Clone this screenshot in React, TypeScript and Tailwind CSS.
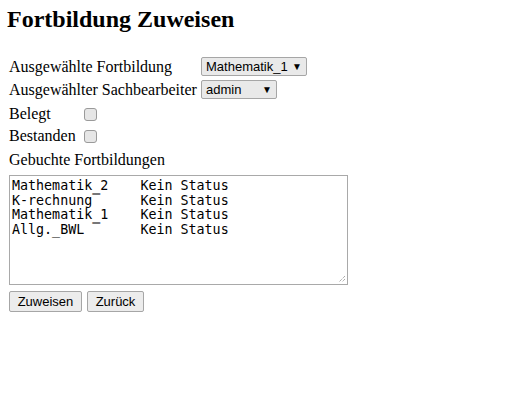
import React from "react";

const serif = { fontFamily: '"Liberation Serif", "Times New Roman", serif' };

function FakeSelect({ value, width }: { value: string; width: string }) {
  return (
    <div
      className={`flex h-[19px] items-center justify-between rounded-[2px] border border-[#a6a6a6] bg-[#e9e9e9] pl-[4px] pr-[4px] text-[13px] text-black ${width}`}
      style={{ fontFamily: '"Liberation Sans", Arial, sans-serif' }}
    >
      <span>{value}</span>
      <span className="text-[10px] leading-none">▼</span>
    </div>
  );
}

function Checkbox() {
  return <div className="h-[13px] w-[13px] rounded-[3px] border border-[#9a9a9a] bg-[#e6e6e6]" />;
}

export default function App() {
  const text =
    "Mathematik_2    Kein Status\nK-rechnung‾     Kein Status\nMathematik_1    Kein Status\nAllg._BWL ‾     Kein Status";
  return (
    <div className="min-h-[417px] bg-white text-black" style={serif}>
      <div className="px-[8px] pt-[5px]">
        <h2 className="-ml-[1px] text-[24px] font-bold leading-[28px]">Fortbildung Zuweisen</h2>
        <div className="mt-[24px] flex flex-col pl-[1px] text-[16px]">
          <div className="flex h-[19px] items-center">
            <span className="w-[192px]">Ausgewählte Fortbildung</span>
            <FakeSelect value="Mathematik_1" width="w-[106px]" />
          </div>
          <div className="mt-[4px] flex h-[19px] items-center">
            <span className="w-[192px]">Ausgewählter Sachbearbeiter</span>
            <FakeSelect value="admin" width="w-[76px]" />
          </div>
          <div className="mt-[4px] flex h-[22px] items-center">
            <span className="w-[75px]">Belegt</span>
            <Checkbox />
          </div>
          <div className="flex h-[22px] items-center">
            <span className="w-[75px]">Bestanden</span>
            <Checkbox />
          </div>
          <div className="flex h-[25px] items-center">Gebuchte Fortbildungen</div>
          <div className="relative mt-[3px] h-[110px] w-[339px] border border-[#a9a9a9]">
            <pre
              className="px-[2px] pt-[3px] text-[13.33px] leading-[14.5px]"
              style={{ fontFamily: '"DejaVu Sans Mono", monospace' }}
            >
              {text}
            </pre>
            <svg className="absolute bottom-[1px] right-[1px]" width="8" height="8" viewBox="0 0 8 8">
              <path d="M7 1 L1 7 M7 4 L4 7" stroke="#888" strokeWidth="1" strokeDasharray="1 1" />
            </svg>
          </div>
          <div className="mt-[6px] flex gap-[5px]" style={{ fontFamily: '"Liberation Sans", Arial, sans-serif' }}>
            <div className="flex h-[21px] w-[73px] items-center justify-center rounded-[2px] border border-[#a6a6a6] bg-[#ececec] text-[13px]">
              Zuweisen
            </div>
            <div className="flex h-[21px] w-[57px] items-center justify-center rounded-[2px] border border-[#a6a6a6] bg-[#ececec] text-[13px]">
              Zurück
            </div>
          </div>
        </div>
      </div>
    </div>
  );
}
